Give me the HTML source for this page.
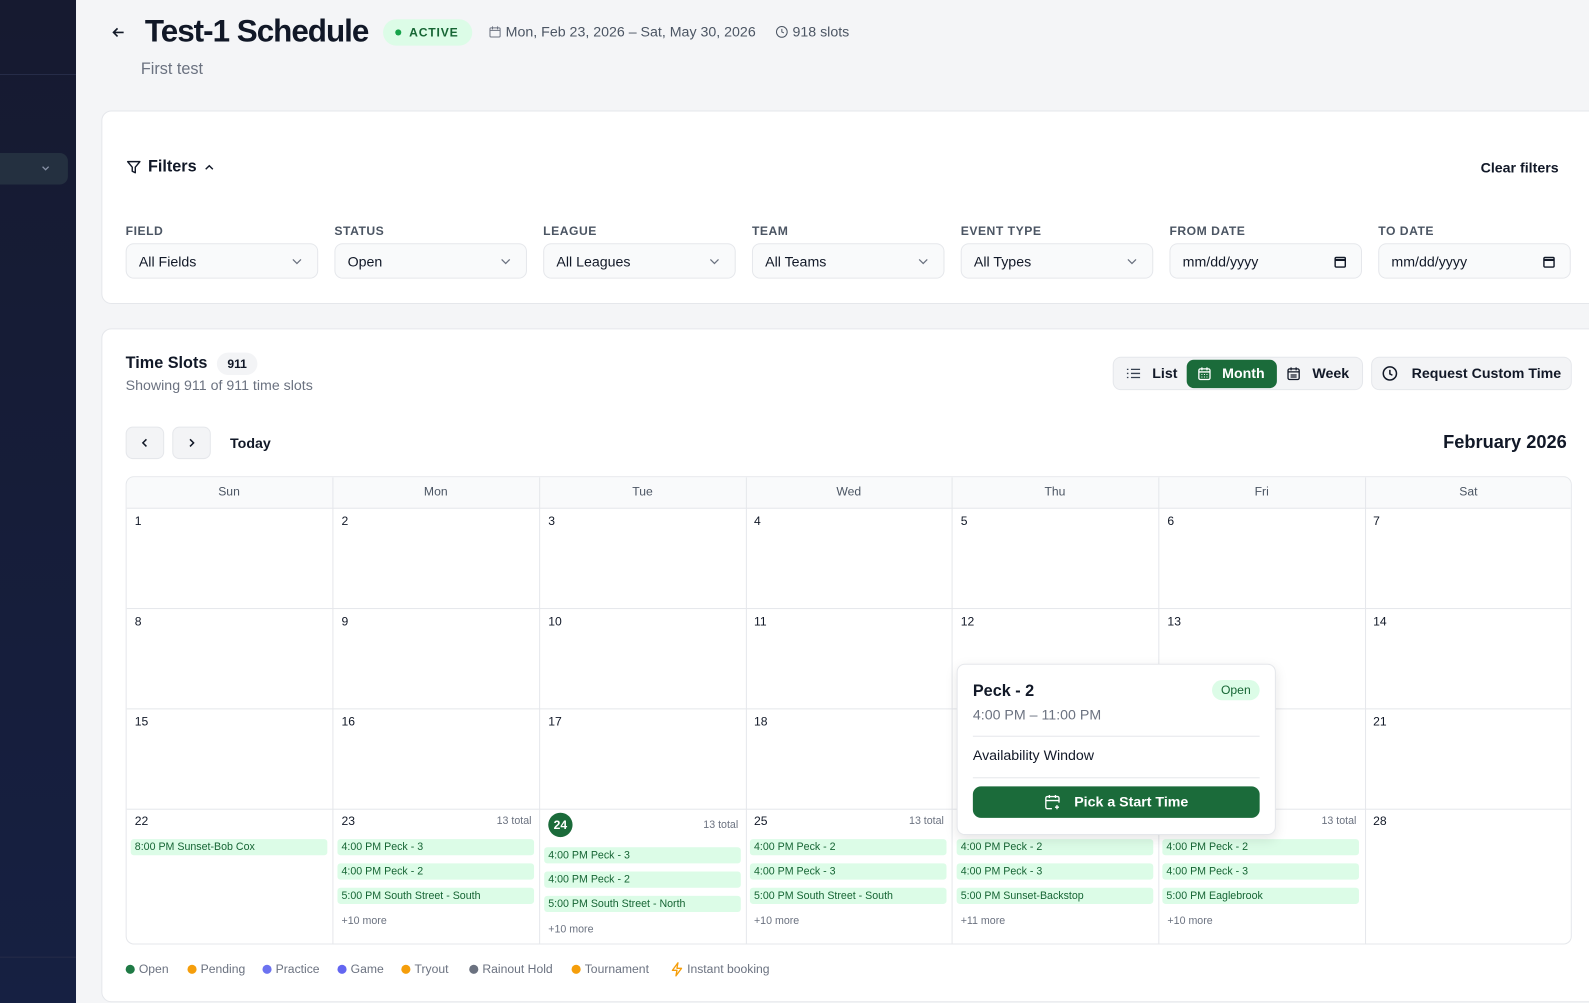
<!DOCTYPE html>
<html><head><meta charset="utf-8"><style>
*{box-sizing:border-box;margin:0;padding:0}
html,body{width:1589px;height:1003px;overflow:hidden;background:#f4f5f7}
body{font-family:"Liberation Sans",Arial,sans-serif;color:#111827;position:relative}
#w{position:absolute;left:0;top:0;width:1568px;height:990px;transform:scale(1.01340);transform-origin:0 0}
.a{position:absolute}
.side{left:0;top:0;width:75px;height:1003px;background:linear-gradient(#161a30,#162042)}
.card{background:#fff;border:1px solid #e5e7eb;border-radius:10px}
.lbl{font-size:12px;font-weight:bold;color:#4b5563;letter-spacing:.5px}
.sel{height:35px;width:190px;border:1px solid #e5e7eb;border-radius:8px;background:#f9fafb;font-size:14px;padding:9px 12px;color:#111827}
.sel svg{position:absolute;right:14px;top:12px}
.hd{font-size:12px;color:#4b5563;text-align:center;top:478px}
.dn{font-size:12px;color:#111827}
.chip{height:16px;background:#dcfce7;border-radius:3px;font-size:10.5px;color:#166534;padding:2px 4px;white-space:nowrap}
.more{font-size:10.5px;color:#6b7280}
.tot{font-size:10.5px;color:#6b7280}
.leg{font-size:12px;color:#6b7280;top:949px}
.dot{display:inline-block;width:9px;height:9px;border-radius:50%;margin-right:4px;vertical-align:-1px}
</style></head><body><div id="w">
<div class="a side"></div>
<div class="a" style="left:0;top:73px;width:75px;height:1px;background:#262c48"></div>
<div class="a" style="left:0;top:151px;width:67px;height:31px;background:#243040;border-radius:0 8px 8px 0"></div>
<svg class="a" style="left:40px;top:161px" width="10" height="10" viewBox="0 0 10 10"><path d="M2 3.5l3 3 3-3" stroke="#8a93a8" fill="none" stroke-width="1.3"/></svg>
<div class="a" style="left:0;top:944px;width:75px;height:1px;background:#262c48"></div>

<svg class="a" style="left:109px;top:24px" width="16" height="16" viewBox="0 0 16 16"><path d="M13 8H3M7 4L3 8l4 4" stroke="#111827" stroke-width="1.6" fill="none"/></svg>
<div class="a" style="left:143px;top:13px;font-size:31px;font-weight:bold;letter-spacing:-1px;color:#111827">Test-1 Schedule</div>
<div class="a" style="left:378px;top:19px;width:88px;height:26px;border-radius:13px;background:#dcfce7;color:#166534;font-size:12px;font-weight:bold;letter-spacing:.8px;padding:6px 0 0 12px"><span class="dot" style="width:6px;height:6px;background:#16a34a;vertical-align:1px"></span> ACTIVE</div>
<svg class="a" style="left:482px;top:25px" width="13" height="13" viewBox="0 0 13 13"><rect x="1.5" y="2.5" width="10" height="9" rx="1" stroke="#6b7280" fill="none"/><path d="M1.5 5h10M4 1v3M9 1v3" stroke="#6b7280"/></svg>
<div class="a" style="left:499px;top:23px;font-size:14px;color:#4b5563">Mon, Feb 23, 2026 – Sat, May 30, 2026</div>
<svg class="a" style="left:765px;top:25px" width="13" height="13" viewBox="0 0 13 13"><circle cx="6.5" cy="6.5" r="5.3" stroke="#4b5563" fill="none"/><path d="M6.5 3.5v3l2 1" stroke="#4b5563" fill="none"/></svg>
<div class="a" style="left:782px;top:23px;font-size:14px;color:#4b5563">918 slots</div>
<div class="a" style="left:139px;top:60px;font-size:16px;color:#6b7280">First test</div>

<div class="a card" style="left:100px;top:109px;width:1510px;height:191px"></div>
<svg class="a" style="left:124px;top:157px" width="16" height="16" viewBox="0 0 16 16"><path d="M2 2.5h12L9.5 8v5.5l-3-1.5V8z" stroke="#111827" fill="none" stroke-width="1.4" stroke-linejoin="round"/></svg>
<div class="a" style="left:146px;top:156px;font-size:16px;font-weight:bold">Filters</div>
<svg class="a" style="left:201px;top:160px" width="11" height="10" viewBox="0 0 11 10"><path d="M2 7l3.5-3.5L9 7" stroke="#111827" fill="none" stroke-width="1.4"/></svg>
<div class="a" style="left:1461px;top:157px;font-size:14px;font-weight:bold">Clear filters</div>

<div class="a lbl" style="left:124px;top:221px">FIELD</div>
<div class="a lbl" style="left:330px;top:221px">STATUS</div>
<div class="a lbl" style="left:536px;top:221px">LEAGUE</div>
<div class="a lbl" style="left:742px;top:221px">TEAM</div>
<div class="a lbl" style="left:948px;top:221px">EVENT TYPE</div>
<div class="a lbl" style="left:1154px;top:221px">FROM DATE</div>
<div class="a lbl" style="left:1360px;top:221px">TO DATE</div>
<div class="a sel" style="left:124px;top:240px">All Fields<svg width="12" height="10" viewBox="0 0 12 10"><path d="M2 3l4 4 4-4" stroke="#6b7280" fill="none" stroke-width="1.2"/></svg></div>
<div class="a sel" style="left:330px;top:240px">Open<svg width="12" height="10" viewBox="0 0 12 10"><path d="M2 3l4 4 4-4" stroke="#6b7280" fill="none" stroke-width="1.2"/></svg></div>
<div class="a sel" style="left:536px;top:240px">All Leagues<svg width="12" height="10" viewBox="0 0 12 10"><path d="M2 3l4 4 4-4" stroke="#6b7280" fill="none" stroke-width="1.2"/></svg></div>
<div class="a sel" style="left:742px;top:240px">All Teams<svg width="12" height="10" viewBox="0 0 12 10"><path d="M2 3l4 4 4-4" stroke="#6b7280" fill="none" stroke-width="1.2"/></svg></div>
<div class="a sel" style="left:948px;top:240px">All Types<svg width="12" height="10" viewBox="0 0 12 10"><path d="M2 3l4 4 4-4" stroke="#6b7280" fill="none" stroke-width="1.2"/></svg></div>
<div class="a sel" style="left:1154px;top:240px">mm/dd/yyyy<svg width="13" height="13" viewBox="0 0 13 13" style="top:11px"><rect x="1.5" y="2" width="10" height="9.5" rx="1" stroke="#111827" stroke-width="1.4" fill="none"/><path d="M1.5 4.5h10" stroke="#111827" stroke-width="2"/></svg></div>
<div class="a sel" style="left:1360px;top:240px">mm/dd/yyyy<svg width="13" height="13" viewBox="0 0 13 13" style="top:11px"><rect x="1.5" y="2" width="10" height="9.5" rx="1" stroke="#111827" stroke-width="1.4" fill="none"/><path d="M1.5 4.5h10" stroke="#111827" stroke-width="2"/></svg></div>

<div class="a card" style="left:100px;top:324px;width:1510px;height:665px"></div>
<div class="a" style="left:124px;top:350px;font-size:16px;font-weight:bold">Time Slots</div>
<div class="a" style="left:214px;top:348px;width:40px;height:22px;border-radius:11px;background:#f3f4f6;font-size:12px;font-weight:bold;text-align:center;padding-top:4px">911</div>
<div class="a" style="left:124px;top:372px;font-size:14px;color:#6b7280">Showing 911 of 911 time slots</div>

<div class="a" style="left:1098px;top:352px;width:247px;height:33px;border:1px solid #e5e7eb;border-radius:8px;background:#f3f4f6"></div>
<svg class="a" style="left:1111px;top:361px" width="15" height="15" viewBox="0 0 15 15"><path d="M5 3.5h9M5 7.5h9M5 11.5h9M1 3.5h1.5M1 7.5h1.5M1 11.5h1.5" stroke="#374151" stroke-width="1.3"/></svg>
<div class="a" style="left:1137px;top:360px;font-size:14px;font-weight:bold">List</div>
<div class="a" style="left:1171px;top:355px;width:89px;height:28px;border-radius:7px;background:#1b6b3a"></div>
<svg class="a" style="left:1181px;top:361px" width="15" height="15" viewBox="0 0 15 15"><rect x="2" y="3" width="11" height="10.5" rx="1.5" stroke="#fff" fill="none" stroke-width="1.3"/><path d="M2 6h11M5 1.5v3M10 1.5v3" stroke="#fff" stroke-width="1.3"/><path d="M4.5 8.5h1M7 8.5h1M9.5 8.5h1M4.5 11h1M7 11h1M9.5 11h1" stroke="#fff"/></svg>
<div class="a" style="left:1206px;top:360px;font-size:14px;font-weight:bold;color:#fff">Month</div>
<svg class="a" style="left:1269px;top:361px" width="15" height="15" viewBox="0 0 15 15"><rect x="2" y="3" width="11" height="10.5" rx="1.5" stroke="#111827" fill="none" stroke-width="1.3"/><path d="M2 6h11M5 1.5v3M10 1.5v3M4.5 9h6M4.5 11h6" stroke="#111827" stroke-width="1.2"/></svg>
<div class="a" style="left:1295px;top:360px;font-size:14px;font-weight:bold">Week</div>
<div class="a" style="left:1353px;top:352px;width:198px;height:33px;border:1px solid #e5e7eb;border-radius:8px;background:#f3f4f6"></div>
<svg class="a" style="left:1363px;top:360px" width="17" height="17" viewBox="0 0 17 17"><circle cx="8.5" cy="8.5" r="6.5" stroke="#111827" fill="none" stroke-width="1.5"/><path d="M8.5 5v4l2.5 1.3" stroke="#111827" fill="none" stroke-width="1.5"/></svg>
<div class="a" style="left:1393px;top:360px;font-size:14px;font-weight:bold">Request Custom Time</div>

<div class="a" style="left:124px;top:421px;width:38px;height:32px;border:1px solid #e5e7eb;border-radius:7px;background:#f3f4f6"></div>
<svg class="a" style="left:138px;top:432px" width="10" height="10" viewBox="0 0 10 10"><path d="M6.5 1.5L3 5l3.5 3.5" stroke="#111827" fill="none" stroke-width="1.5"/></svg>
<div class="a" style="left:170px;top:421px;width:38px;height:32px;border:1px solid #e5e7eb;border-radius:7px;background:#f3f4f6"></div>
<svg class="a" style="left:184px;top:432px" width="10" height="10" viewBox="0 0 10 10"><path d="M3.5 1.5L7 5 3.5 8.5" stroke="#111827" fill="none" stroke-width="1.5"/></svg>
<div class="a" style="left:227px;top:429px;font-size:14px;font-weight:bold">Today</div>
<div class="a" style="left:1424px;top:426px;font-size:18px;font-weight:bold">February 2026</div>

<div class="a" style="left:124px;top:470px;width:1427px;height:462px;border:1px solid #e5e7eb;border-radius:8px;overflow:hidden">
<div class="a" style="left:0;top:0;width:100%;height:31px;background:#f9fafb;border-bottom:1px solid #e5e7eb"></div>
<div class="a" style="left:0;top:129px;width:100%;height:1px;background:#e5e7eb"></div>
<div class="a" style="left:0;top:228px;width:100%;height:1px;background:#e5e7eb"></div>
<div class="a" style="left:0;top:327px;width:100%;height:1px;background:#e5e7eb"></div>
<div class="a" style="left:203px;top:0;width:1px;height:100%;background:#e5e7eb"></div>
<div class="a" style="left:407px;top:0;width:1px;height:100%;background:#e5e7eb"></div>
<div class="a" style="left:611px;top:0;width:1px;height:100%;background:#e5e7eb"></div>
<div class="a" style="left:814px;top:0;width:1px;height:100%;background:#e5e7eb"></div>
<div class="a" style="left:1018px;top:0;width:1px;height:100%;background:#e5e7eb"></div>
<div class="a" style="left:1222px;top:0;width:1px;height:100%;background:#e5e7eb"></div>
</div>
<div class="a hd" style="left:124px;width:204px">Sun</div>
<div class="a hd" style="left:328px;width:204px">Mon</div>
<div class="a hd" style="left:532px;width:204px">Tue</div>
<div class="a hd" style="left:736px;width:203px">Wed</div>
<div class="a hd" style="left:939px;width:204px">Thu</div>
<div class="a hd" style="left:1143px;width:204px">Fri</div>
<div class="a hd" style="left:1347px;width:204px">Sat</div>

<div class="a dn" style="left:133px;top:507px">1</div><div class="a dn" style="left:337px;top:507px">2</div><div class="a dn" style="left:541px;top:507px">3</div><div class="a dn" style="left:744px;top:507px">4</div><div class="a dn" style="left:948px;top:507px">5</div><div class="a dn" style="left:1152px;top:507px">6</div><div class="a dn" style="left:1355px;top:507px">7</div>
<div class="a dn" style="left:133px;top:606px">8</div><div class="a dn" style="left:337px;top:606px">9</div><div class="a dn" style="left:541px;top:606px">10</div><div class="a dn" style="left:744px;top:606px">11</div><div class="a dn" style="left:948px;top:606px">12</div><div class="a dn" style="left:1152px;top:606px">13</div><div class="a dn" style="left:1355px;top:606px">14</div>
<div class="a dn" style="left:133px;top:705px">15</div><div class="a dn" style="left:337px;top:705px">16</div><div class="a dn" style="left:541px;top:705px">17</div><div class="a dn" style="left:744px;top:705px">18</div><div class="a dn" style="left:1355px;top:705px">21</div>
<div class="a dn" style="left:133px;top:803px">22</div><div class="a dn" style="left:337px;top:803px">23</div><div class="a dn" style="left:744px;top:803px">25</div><div class="a dn" style="left:1355px;top:803px">28</div>
<div class="a" style="left:541px;top:802px;width:24px;height:24px;border-radius:50%;background:#1b6b3a;color:#fff;font-size:12px;font-weight:bold;text-align:center;padding-top:5px">24</div>
<div class="a tot" style="left:490px;top:804px">13 total</div>
<div class="a tot" style="left:694px;top:808px">13 total</div>
<div class="a tot" style="left:897px;top:804px">13 total</div>
<div class="a tot" style="left:1304px;top:804px">13 total</div>

<div class="a chip" style="left:129px;top:828px;width:194px">8:00 PM Sunset-Bob Cox</div>
<div class="a chip" style="left:333px;top:828px;width:194px">4:00 PM Peck - 3</div>
<div class="a chip" style="left:333px;top:852px;width:194px">4:00 PM Peck - 2</div>
<div class="a chip" style="left:333px;top:876px;width:194px">5:00 PM South Street - South</div>
<div class="a more" style="left:337px;top:903px">+10 more</div>
<div class="a chip" style="left:537px;top:836px;width:194px">4:00 PM Peck - 3</div>
<div class="a chip" style="left:537px;top:860px;width:194px">4:00 PM Peck - 2</div>
<div class="a chip" style="left:537px;top:884px;width:194px">5:00 PM South Street - North</div>
<div class="a more" style="left:541px;top:911px">+10 more</div>
<div class="a chip" style="left:740px;top:828px;width:194px">4:00 PM Peck - 2</div>
<div class="a chip" style="left:740px;top:852px;width:194px">4:00 PM Peck - 3</div>
<div class="a chip" style="left:740px;top:876px;width:194px">5:00 PM South Street - South</div>
<div class="a more" style="left:744px;top:903px">+10 more</div>
<div class="a chip" style="left:944px;top:828px;width:194px">4:00 PM Peck - 2</div>
<div class="a chip" style="left:944px;top:852px;width:194px">4:00 PM Peck - 3</div>
<div class="a chip" style="left:944px;top:876px;width:194px">5:00 PM Sunset-Backstop</div>
<div class="a more" style="left:948px;top:903px">+11 more</div>
<div class="a chip" style="left:1147px;top:828px;width:194px">4:00 PM Peck - 2</div>
<div class="a chip" style="left:1147px;top:852px;width:194px">4:00 PM Peck - 3</div>
<div class="a chip" style="left:1147px;top:876px;width:194px">5:00 PM Eaglebrook</div>
<div class="a more" style="left:1152px;top:903px">+10 more</div>

<div class="a" style="left:944px;top:655px;width:315px;height:169px;background:#fff;border:1px solid #e5e7eb;border-radius:8px;box-shadow:0 4px 12px rgba(0,0,0,.1)"></div>
<div class="a" style="left:960px;top:674px;font-size:16px;font-weight:bold">Peck - 2</div>
<div class="a" style="left:1196px;top:671px;width:47px;height:20px;border-radius:10px;background:#dcfce7;color:#166534;font-size:12px;text-align:center;padding-top:3px">Open</div>
<div class="a" style="left:960px;top:697px;font-size:14px;color:#6b7280">4:00 PM – 11:00 PM</div>
<div class="a" style="left:960px;top:726px;width:283px;height:1px;background:#e5e7eb"></div>
<div class="a" style="left:960px;top:737px;font-size:14px">Availability Window</div>
<div class="a" style="left:960px;top:767px;width:283px;height:1px;background:#e5e7eb"></div>
<div class="a" style="left:960px;top:776px;width:283px;height:31px;border-radius:8px;background:#1b6b3a"></div>
<svg class="a" style="left:1030px;top:783px" width="17" height="17" viewBox="0 0 17 17"><path d="M8 15H3.5a1.5 1.5 0 0 1-1.5-1.5v-9A1.5 1.5 0 0 1 3.5 3h10A1.5 1.5 0 0 1 15 4.5V9M2 7h13M5.5 1.5v3M11.5 1.5v3M13 11.5v4M11 13.5h4" stroke="#fff" fill="none" stroke-width="1.3"/></svg>
<div class="a" style="left:1060px;top:783px;font-size:14px;font-weight:bold;color:#fff">Pick a Start Time</div>

<div class="a leg" style="left:124px"><span class="dot" style="background:#1f7a45"></span>Open</div>
<div class="a leg" style="left:185px"><span class="dot" style="background:#f59e0b"></span>Pending</div>
<div class="a leg" style="left:259px"><span class="dot" style="background:#6c72f0"></span>Practice</div>
<div class="a leg" style="left:333px"><span class="dot" style="background:#6366f1"></span>Game</div>
<div class="a leg" style="left:396px"><span class="dot" style="background:#f59e0b"></span>Tryout</div>
<div class="a leg" style="left:463px"><span class="dot" style="background:#6b7280"></span>Rainout Hold</div>
<div class="a leg" style="left:564px"><span class="dot" style="background:#f59e0b"></span>Tournament</div>
<svg class="a" style="left:661px;top:949px" width="14" height="15" viewBox="0 0 14 15"><path d="M8 1L2.5 8.5H7L6 14l5.5-7.5H7z" stroke="#f59e0b" fill="none" stroke-width="1.3" stroke-linejoin="round"/></svg>
<div class="a leg" style="left:678px">Instant booking</div>
</div></body></html>
